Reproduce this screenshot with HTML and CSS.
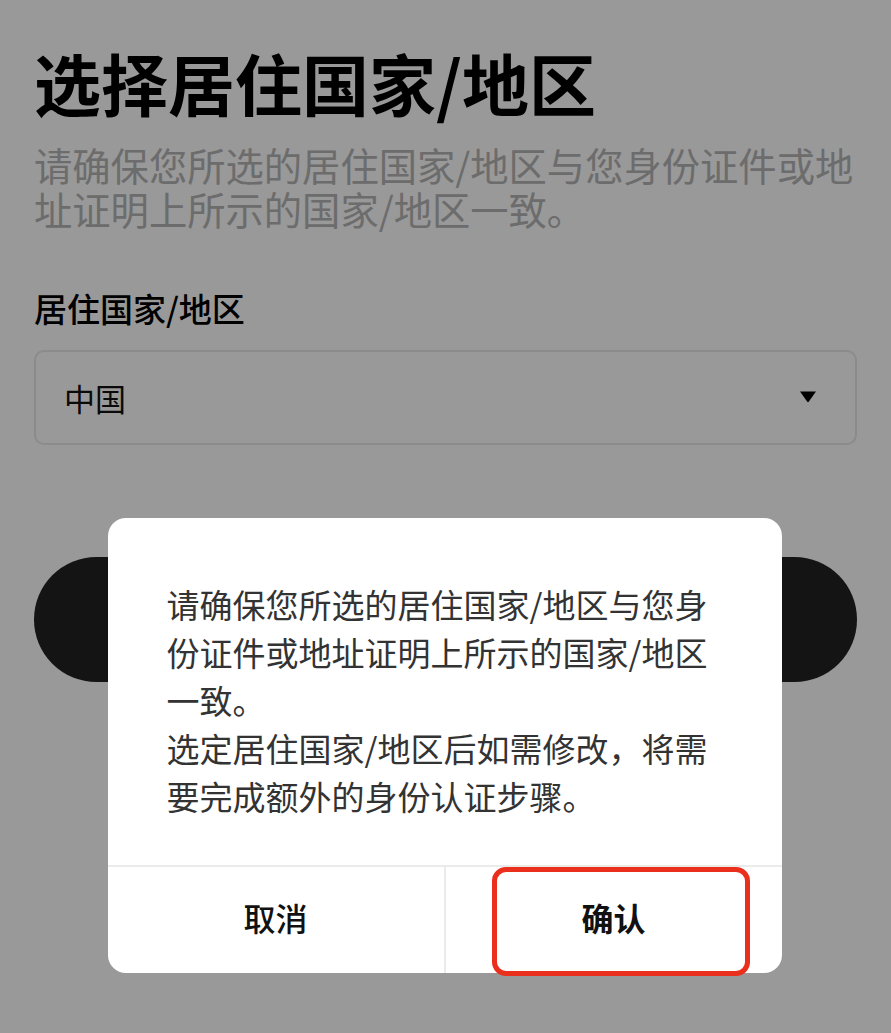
FILE: index.html
```html
<!DOCTYPE html>
<html lang="zh-CN">
<head>
  <meta charset="UTF-8">
  <meta name="viewport" content="width=device-width, initial-scale=1.0">
  <title>选择居住国家/地区</title>
  <link rel="stylesheet" href="styles.css">
</head>
<body>
  <div class="page">
    <h1 class="title">选择居住国家/地区</h1>
    <p class="subtitle">请确保您所选的居住国家/地区与您身份证件或地址证明上所示的国家/地区一致。</p>

    <div class="field">
      <div class="field-label">居住国家/地区</div>
      <div class="select">
        <span class="select-value">中国</span>
        <svg class="caret" width="18" height="13" viewBox="0 0 18 13">
          <path d="M1 1.5 L17 1.5 L9.7 11.8 Q9 12.6 8.3 11.8 Z" fill="#000"/>
        </svg>
      </div>
    </div>

    <button class="primary-btn" aria-label="继续"></button>
  </div>

  <!-- confirm dialog over a dimmed page -->
  <div class="mask">
    <div class="dialog">
      <div class="dialog-body">
        <p>请确保您所选的居住国家/地区与您身份证件或地址证明上所示的国家/地区一致。</p>
        <p>选定居住国家/地区后如需修改，将需要完成额外的身份认证步骤。</p>
      </div>
      <div class="dialog-actions">
        <button class="dialog-btn cancel">取消</button>
        <button class="dialog-btn confirm">
          确认
          <span class="highlight"></span>
        </button>
      </div>
    </div>
  </div>
</body>
</html>
```

FILE: styles.css
```css
body {
  margin: 0;
  background: #fff;
  font-family: "Noto Sans CJK SC", "Noto Sans", sans-serif;
  color: #111;
}

.page {
  padding: 0 34px;
}

.title {
  margin: 42px 0 0;
  font-size: 67px;
  line-height: 80px;
  font-weight: 700;
  color: #000;
}

.subtitle {
  margin: 21px 0 0;
  font-size: 38.3px;
  line-height: 44px;
  color: #b5b5b5;
}

.field {
  margin-top: 57px;
}

.field-label {
  font-size: 33px;
  line-height: 40px;
  font-weight: 500;
  color: #000;
}

.select {
  margin-top: 22px;
  height: 95px;
  box-sizing: border-box;
  border: 2px solid #e8e8e8;
  border-radius: 10px;
  padding: 0 38px 0 28px;
  display: flex;
  align-items: center;
  justify-content: space-between;
}

.select-value {
  font-size: 31px;
  color: #111;
}

.caret {
  display: block;
  margin-top: -2px;
}

.primary-btn {
  display: block;
  width: 100%;
  height: 125px;
  margin-top: 112px;
  border: none;
  border-radius: 63px;
  background: #222;
}

.mask {
  position: fixed;
  inset: 0;
  background: rgba(0, 0, 0, 0.4);
  display: flex;
  flex-direction: column;
  align-items: center;
  padding-top: 518px;
}

.dialog {
  width: 674px;
  margin-left: -2px;
  background: #fff;
  border-radius: 18px;
}

.dialog-body {
  padding: 62px 59px 45px;
  font-size: 33px;
  line-height: 48px;
  color: #333;
}

.dialog-body p {
  margin: 0;
}

.dialog-actions {
  display: flex;
  border-top: 2px solid #ebebeb;
  height: 106px;
}

.dialog-btn {
  flex: 1;
  border: none;
  background: none;
  font-family: inherit;
  font-size: 32px;
  color: #111;
  padding: 0 0 6px;
}

.cancel {
  font-weight: 500;
}

.confirm {
  position: relative;
  font-weight: 700;
  border-left: 2px solid #ebebeb;
}

/* red callout round the confirm button */
.highlight {
  position: absolute;
  left: 46px;
  top: 0;
  width: 258px;
  height: 109px;
  box-sizing: border-box;
  border: 5px solid #ea2f1c;
  border-radius: 14px;
}
```
